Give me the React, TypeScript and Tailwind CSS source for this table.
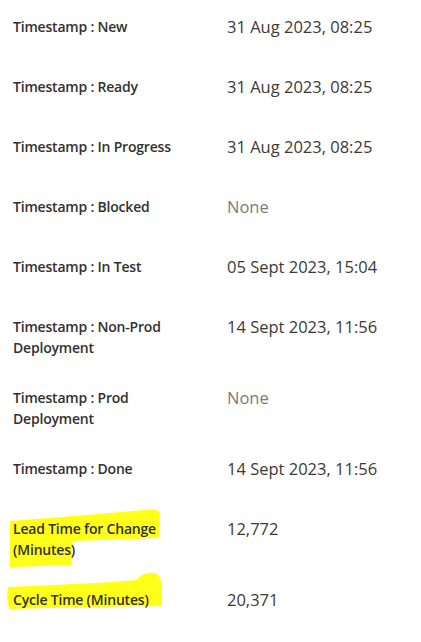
const rows = [
  { label: "Timestamp : New", value: "31 Aug 2023, 08:25" },
  { label: "Timestamp : Ready", value: "31 Aug 2023, 08:25" },
  { label: "Timestamp : In Progress", value: "31 Aug 2023, 08:25" },
  { label: "Timestamp : Blocked", value: null },
  { label: "Timestamp : In Test", value: "05 Sept 2023, 15:04" },
  { label: "Timestamp : Non-Prod Deployment", value: "14 Sept 2023, 11:56" },
  { label: "Timestamp : Prod Deployment", value: null },
  { label: "Timestamp : Done", value: "14 Sept 2023, 11:56" },
  { label: "Lead Time for Change (Minutes)", value: "12,772", mark: "lead" },
  { label: "Cycle Time (Minutes)", value: "20,371", mark: "cycle" },
];

// yellow marker scribbles drawn over the screenshot
function Marker({ kind }: { kind: string }) {
  if (kind === "lead") {
    return (
      <svg className="absolute left-[-13px] top-[-12px] w-[180px] h-[70px]" viewBox="0 0 180 70">
        <path
          d="M23 14 L100 8 L168 2 L173 6 L172 31 L86 34 L84 58 L30 60 L23 60 L23 30 Z"
          fill="#ffff1a"
        />
      </svg>
    );
  }
  return (
    <svg className="absolute left-[-13px] top-[-19px] w-[180px] h-[48px]" viewBox="0 0 180 48">
      <path
        d="M21 16 L110 12 L150 9 C154 3 160 1 168 2 C174 5 175 12 175 18 L175 35 L110 36 L22 38 L20 26 Z"
        fill="#ffff1a"
      />
    </svg>
  );
}

export default function App() {
  return (
    <div
      className="min-h-screen bg-white pt-[5px] text-[#323130]"
      style={{ fontFamily: "'Open Sans', 'Noto Sans', sans-serif" }}
    >
      {rows.map((row) => (
        <div key={row.label} className="flex items-start pt-[12px] pb-[18px] min-h-[60px]">
          <div className="relative w-[203px] pl-[13px] pr-[8px] shrink-0 text-[14px] leading-[20.5px] font-semibold tracking-[-0.2px]">
            {row.mark && <Marker kind={row.mark} />}
            <span className="relative">{row.label}</span>
          </div>
          <div className="pl-[24px] text-[16.5px] leading-[20.5px]">
            {row.value ? (
              <span className="text-[#3b3a39]">{row.value}</span>
            ) : (
              <span className="text-[#7a7a7a]">None</span>
            )}
          </div>
        </div>
      ))}
    </div>
  );
}
